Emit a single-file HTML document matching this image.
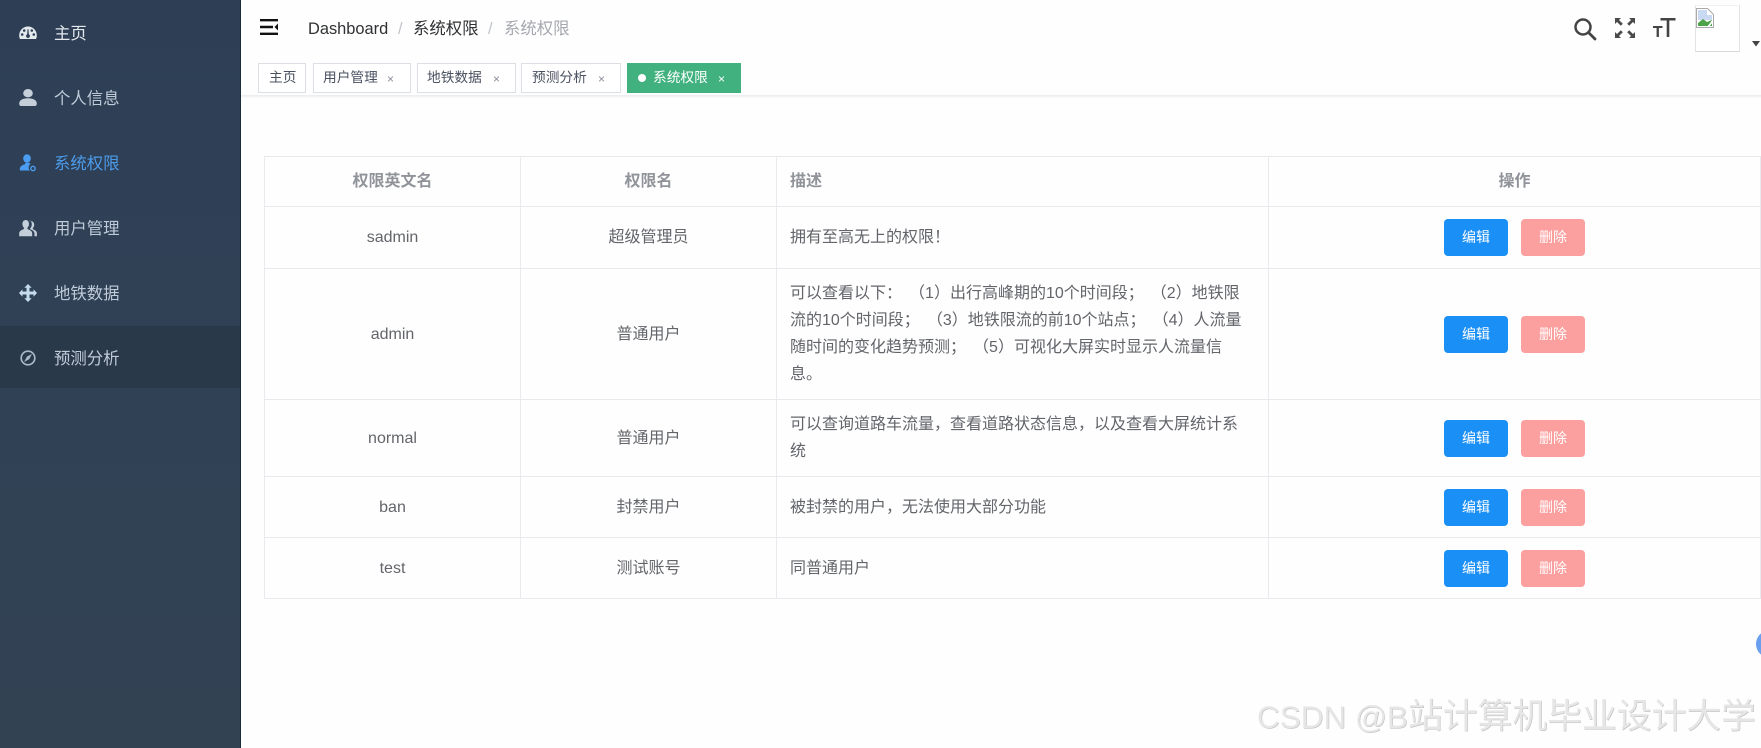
<!DOCTYPE html>
<html lang="zh">
<head>
<meta charset="utf-8">
<title>系统权限</title>
<style>
*{box-sizing:border-box}
html,body{margin:0;padding:0;width:1761px;height:748px;overflow:hidden;background:#fefefe;font-family:"Liberation Sans","Noto Sans CJK SC",sans-serif}
.abs,.abs *{white-space:nowrap}
.abs{position:absolute}
#side{position:absolute;left:0;top:0;width:241px;height:748px;border-right:1px solid #1c2c3a;background:linear-gradient(#2e3f55,#304156 300px,#324253)}
#side .band{position:absolute;left:0;top:326px;width:240px;height:62px;background:#2a3949}
#side .t{position:absolute;left:54px;font-size:16.4px;line-height:20px;color:#bfcbd9}
#side svg{position:absolute;left:19px;width:18px;height:18px}
.bc{position:absolute;top:19px;font-size:16.4px;line-height:20px;color:#303133}
.tab{position:absolute;top:63px;height:30px;border:1px solid #dcdfe4;background:#fff;font-size:13.7px;line-height:28px;color:#495060}
.tab span{position:absolute;top:0}
.tab i{position:absolute;top:1px;font-style:normal;font-size:12px;color:#8a8f98}
#bar{position:absolute;left:241px;top:95px;width:1520px;height:3px;background:linear-gradient(#eaebed,#fafafa)}
table{position:absolute;left:264px;top:156px;width:1497px;border-collapse:collapse;table-layout:fixed;font-size:16px;color:#63656a}
td,th{border:1px solid #e8eaee;padding:0;text-align:center;font-weight:400;line-height:27px}
th{font-weight:700;color:#909399;height:50px}
td.l,th.l{text-align:left;padding-left:13px;white-space:nowrap}
td.w{word-spacing:2.6px}
.b{display:inline-block;width:64px;height:37px;border-radius:4px;color:#fff;font-size:14px;line-height:36px;vertical-align:middle}
.b.e{background:#1a8ff6}
.b.d{background:#fc9f9f;margin-left:13px}
#wm{position:absolute;left:1257px;top:697px;font-size:31.5px;line-height:40px;color:#e6e6e6;text-shadow:.5px .5px 0 #b8b8b8;white-space:nowrap}
#wm span{font-size:34.8px}
</style>
</head>
<body>
<div id="side">
  <div class="band"></div>
  <svg style="top:24px" viewBox="0 0 18 18"><path fill="#e4e9ee" fill-rule="evenodd" d="M9 2.500C4 2.500.2 6.500.2 11.500c0 1.400.3 2.500.8 3.500h16c.5-1 .8-2.100.8-3.500 0-5-3.800-9-8.800-9zM3.200 11.800a1.300 1.300 0 1 1 0-2.600 1.300 1.300 0 0 1 0 2.600zm2-4a1.300 1.300 0 1 1 0-2.600 1.300 1.300 0 0 1 0 2.600zM9 14a2 2 0 0 1-.8-3.800l.3-5h1l.3 5A2 2 0 0 1 9 14zm3.800-6.200a1.300 1.300 0 1 1 0-2.600 1.300 1.300 0 0 1 0 2.600zm2 4a1.300 1.300 0 1 1 0-2.600 1.300 1.300 0 0 1 0 2.600z"/></svg>
  <div class="t" style="top:24px;color:#e3e8ed">主页</div>

  <svg style="top:89px" viewBox="0 0 18 18"><ellipse cx="9" cy="4.200" rx="4.800" ry="4.200" fill="#c5cfda"/><path fill="#c5cfda" d="M9 9.300c-5 0-8.800 1.800-8.800 5.200 0 1.800.8 2.500 2 2.500h13.600c1.200 0 2-.7 2-2.500 0-3.400-3.800-5.200-8.800-5.200z"/></svg>
  <div class="t" style="top:89px">个人信息</div>

  <svg style="top:154px" viewBox="0 0 18 18"><ellipse cx="8" cy="4.500" rx="3.800" ry="4.300" fill="#4a9df0"/><path fill="#4a9df0" d="M8 8.800c-1 0-1.900.2-1.900 1.500C3.300 11 .8 12.500.8 15.200v1.300h10.200c-.8-.8-1.400-1.800-1.400-2.900 0-1.700.9-3.100 2.200-3.800C10.800 9.200 9.500 8.800 8 8.800z"/><circle cx="14" cy="14.500" r="2.200" fill="none" stroke="#4a9df0" stroke-width="1.400"/></svg>
  <div class="t" style="top:154px;color:#4c9beb">系统权限</div>

  <svg style="top:219px" viewBox="0 0 18 18"><path fill="#c5cfda" d="M6.800 1C4.800 1 3.400 2.800 3.400 5c0 1.700.7 3.100 1.800 3.900-.1.900-.6 1.400-1.800 1.900C1.600 11.600.2 12.400.2 14.500v2.800h13v-2.800c0-2.100-1.400-2.900-3.200-3.700-1.200-.5-1.700-1-1.800-1.900 1.100-.8 1.800-2.200 1.800-3.900C10 2.800 8.700 1 6.800 1z"/><path fill="#c5cfda" d="M10.800 1.200c1.300.9 2 2.300 2 4 0 1.800-.7 3.300-1.800 4.300 0 .5.300.8 1.300 1.300 2 .9 3.200 2 3.200 4.200v2.300h2.400v-2.800c0-2-1-2.800-2.700-3.600-1-.5-1.500-1-1.500-1.700 1-.8 1.500-2 1.500-3.400 0-2.600-1.800-4-4.400-3.600z"/></svg>
  <div class="t" style="top:219px">用户管理</div>

  <svg style="top:284px" viewBox="0 0 18 18"><path fill="#c5dbee" d="M9 0l3.700 3.800h-2.200V7.500h4V5.300L18 9l-3.500 3.700v-2.200h-4v3.700h2.200L9 18l-3.700-3.800h2.200v-3.700h-4v2.200L0 9l3.500-3.700v2.200h4V3.800H5.300z"/></svg>
  <div class="t" style="top:284px">地铁数据</div>

  <svg style="top:349px" viewBox="0 0 18 18"><circle cx="9" cy="9" r="6.800" fill="none" stroke="#aab9c9" stroke-width="1.700"/><path fill="#aab9c9" d="M13 5L8 7.500 5 13l5.200-2.700z"/></svg>
  <div class="t" style="top:349px">预测分析</div>
</div>

<svg class="abs" style="left:260px;top:18px" width="19" height="18" viewBox="0 0 19 18"><path fill="#111" d="M0 1h18v2.400H0zM0 7.800h13v2.400H0zM0 14.600h18V17H0zM18 5.500v7L14.500 9z"/></svg>

<div class="bc" style="left:308px">Dashboard</div>
<div class="bc" style="left:398px;color:#c0c4cc">/</div>
<div class="bc" style="left:413px">系统权限</div>
<div class="bc" style="left:488px;color:#c0c4cc">/</div>
<div class="bc" style="left:504px;color:#a5a8ae">系统权限</div>

<svg class="abs" style="left:1573px;top:17px" width="24" height="24" viewBox="0 0 24 24"><circle cx="10" cy="10" r="7.500" fill="none" stroke="#444" stroke-width="2.500"/><path d="M15.500 15.500L22 22" stroke="#444" stroke-width="2.800" stroke-linecap="round"/></svg>
<svg class="abs" style="left:1613px;top:16px" width="24" height="24" viewBox="0 0 24 24"><g fill="#4a4a4a"><path d="M2 2h6L6 4l3.800 3.800L7.800 9.800 4 6 2 8zM22 2v6l-2-2-3.800 3.800-2-2L18 4l-2-2zM2 22v-6l2 2 3.800-3.800 2 2L6 20l2 2zM22 22h-6l2-2-3.800-3.800 2-2L20 18l2-2z"/></g></svg>
<svg class="abs" style="left:1653px;top:17px" width="23" height="22" viewBox="0 0 23 22"><g fill="#444"><path d="M7.500 1h15v2.500h-6.200V20h-2.600V3.500H7.500z"/><path d="M0 9h9.500v2H5.900v9H3.600v-9H0z"/></g></svg>

<div class="abs" style="left:1695px;top:5px;width:45px;height:47px;border:1px solid #e4e4e4;border-top-color:#f2f2f2;border-bottom-color:#d8d8d8;background:#fff"></div>
<svg class="abs" style="left:1696px;top:8px" width="18" height="20" viewBox="0 0 18 20"><path fill="#fff" stroke="#a9a9a9" d="M.5.500h11l6 6v13H.5z"/><path fill="#c9d9f4" d="M2 2h9v5h5v5H2z"/><path fill="#4da34a" d="M2 18v-3l5-4 4 3 5-2v6z"/><path fill="#fff" d="M11 19l6-8v3l-4 5z"/></svg>
<svg class="abs" style="left:1752px;top:41px" width="9" height="6" viewBox="0 0 9 6"><path fill="#444" d="M0 0h8L4 5.500z"/></svg>

<div class="tab" style="left:258px;width:48px"><span style="left:10px">主页</span></div>
<div class="tab" style="left:313px;width:98px"><span style="left:9px">用户管理</span><i style="left:73px">×</i></div>
<div class="tab" style="left:417px;width:99px"><span style="left:9px">地铁数据</span><i style="left:75px">×</i></div>
<div class="tab" style="left:521px;width:100px"><span style="left:10px">预测分析</span><i style="left:76px">×</i></div>
<div class="tab" style="left:627px;width:114px;background:#41b27f;border-color:#41b27f;color:#fff">
  <b style="position:absolute;left:10px;top:10px;width:8px;height:8px;border-radius:50%;background:#fff"></b>
  <span style="left:25px">系统权限</span><i style="left:90px;color:#fff">×</i>
</div>
<div id="bar"></div>

<table>
  <colgroup><col style="width:256px"><col style="width:256px"><col style="width:492px"><col style="width:492px"></colgroup>
  <tr><th>权限英文名</th><th>权限名</th><th class="l">描述</th><th>操作</th></tr>
  <tr style="height:62px"><td>sadmin</td><td>超级管理员</td><td class="l">拥有至高无上的权限！</td><td><span class="b e">编辑</span><span class="b d">删除</span></td></tr>
  <tr style="height:131px"><td>admin</td><td>普通用户</td><td class="l w">可以查看以下： （1）出行高峰期的10个时间段； （2）地铁限<br>流的10个时间段； （3）地铁限流的前10个站点； （4）人流量<br>随时间的变化趋势预测； （5）可视化大屏实时显示人流量信<br>息。</td><td><span class="b e">编辑</span><span class="b d">删除</span></td></tr>
  <tr style="height:77px"><td>normal</td><td>普通用户</td><td class="l">可以查询道路车流量，查看道路状态信息，以及查看大屏统计系<br>统</td><td><span class="b e">编辑</span><span class="b d">删除</span></td></tr>
  <tr style="height:61px"><td>ban</td><td>封禁用户</td><td class="l">被封禁的用户，无法使用大部分功能</td><td><span class="b e">编辑</span><span class="b d">删除</span></td></tr>
  <tr style="height:61px"><td>test</td><td>测试账号</td><td class="l">同普通用户</td><td><span class="b e">编辑</span><span class="b d">删除</span></td></tr>
</table>

<div class="abs" style="left:1756px;top:630px;width:5px;height:28px;overflow:hidden"><div style="width:29px;height:28px;border-radius:50%;background:#6a9ff0"></div></div>
<div id="wm">CSDN @B<span>站计算机毕业设计大学</span></div>
</body>
</html>
